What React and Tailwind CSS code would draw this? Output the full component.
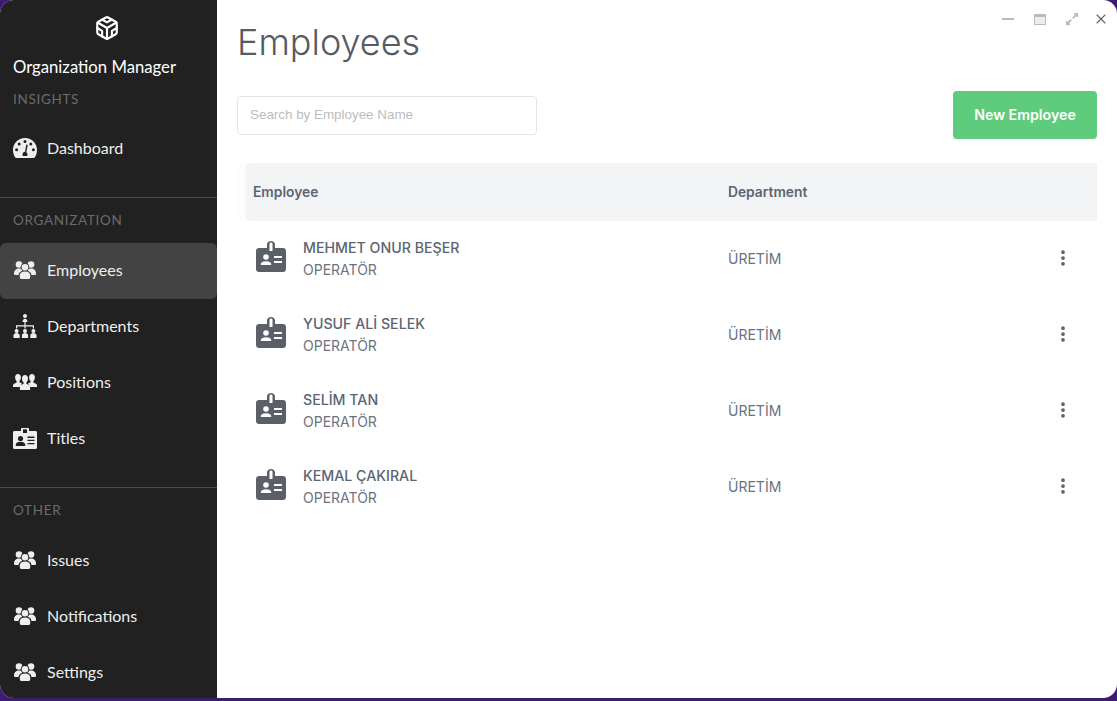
import React from 'react';
import { Codesandbox, X, EllipsisVertical } from 'lucide-react';
import { FaExpandAlt } from 'react-icons/fa';

const employees = [
    { name: 'MEHMET ONUR BEŞER', title: 'OPERATÖR', dept: 'ÜRETİM' },
    { name: 'YUSUF ALİ SELEK', title: 'OPERATÖR', dept: 'ÜRETİM' },
    { name: 'SELİM TAN', title: 'OPERATÖR', dept: 'ÜRETİM' },
    { name: 'KEMAL ÇAKIRAL', title: 'OPERATÖR', dept: 'ÜRETİM' },
];

const GaugeIcon = () => (
    <svg viewBox="0 0 24 20" className="w-[24px] h-[20px]" fill="currentColor">
        <path d="M12 0C5.300 0 0 5.400 0 12c0 2.400.6 4.700 1.800 6.700.4.800 1.100 1.300 2 1.300h16.400c.9 0 1.600-.5 2-1.300C23.400 16.700 24 14.400 24 12 24 5.400 18.700 0 12 0z" />
        <g fill="#212121">
            <circle cx="12" cy="3.600" r="1.500" />
            <circle cx="6.200" cy="6" r="1.500" />
            <circle cx="17.800" cy="6" r="1.500" />
            <circle cx="3.600" cy="11.800" r="1.500" />
            <circle cx="20.400" cy="11.800" r="1.500" />
            <path d="M13.300 6.500l1.500.4-1.500 7.300c.8.600 1.200 1.400 1.200 2.300 0 .6-.2 1-.4 1.500H9.900c-.2-.5-.4-.9-.4-1.500 0-1.500 1.200-2.700 2.500-2.800z" />
        </g>
    </svg>
);

const UsersIcon = () => (
    <svg viewBox="0 0 22 18" className="w-[22px] h-[18px] ml-[1px]" fill="currentColor">
        <mask id="users-gap">
            <rect width="22" height="18" fill="white" />
            <circle cx="11" cy="6.300" r="4.300" fill="black" />
            <path d="M4.500 18v-3.500c0-3 2.500-5 6.500-5s6.500 2 6.500 5V18z" fill="black" />
        </mask>
        <g mask="url(#users-gap)">
            <circle cx="5" cy="3.500" r="3.300" />
            <circle cx="17" cy="3.500" r="3.300" />
            <path d="M0 12.500C0 9.500 2 7.500 5 7.500s5 2 5 5v1.500H1.500C.5 14 0 13.500 0 12.500z" />
            <path d="M22 12.500c0-3-2-5-5-5s-5 2-5 5v1.500h8.500c1 0 1.500-.5 1.500-1.500z" />
        </g>
        <circle cx="11" cy="6.300" r="3.300" />
        <path d="M5.800 14.500c0-2.500 2-3.900 5.200-3.900s5.200 1.400 5.200 3.900v1.700c0 1-.8 1.800-1.800 1.800H7.600c-1 0-1.800-.8-1.800-1.800z" />
    </svg>
);

const SitemapIcon = () => (
    <svg viewBox="0 0 24 25" className="w-[24px] h-[25px]" fill="currentColor">
        <circle cx="12" cy="2" r="2" />
        <path d="M9.500 8c0-2 1-3.300 2.500-3.300S14.500 6 14.500 8z" />
        <path d="M11.400 8h1.200v3.300H21v3.200h-1.200v-2H12.600v2h-1.200v-2H4.200v2H3v-3.200h8.400z" />
        <circle cx="3.600" cy="17" r="2" />
        <circle cx="12" cy="17" r="2" />
        <circle cx="20.400" cy="17" r="2" />
        <path d="M0.500 24v-2.500c0-1.500 1.300-2.500 3.100-2.500s3.100 1 3.100 2.500V24z" />
        <path d="M8.900 24v-2.500c0-1.500 1.300-2.500 3.100-2.500s3.100 1 3.100 2.500V24z" />
        <path d="M17.300 24v-2.500c0-1.500 1.300-2.500 3.100-2.500s3.100 1 3.100 2.500V24z" />
    </svg>
);

const PositionsIcon = () => (
    <svg viewBox="0 0 24 16" className="w-[24px] h-[16px]" fill="currentColor">
        <path d="M5 0c1.700 0 2.900 1.300 2.900 3.200 0 1.600-.6 3-1.500 3.700v1.300l2.600 1.200L6.800 13H0v-1.500c0-.9.500-1.500 1.200-1.800l2.400-1.200V6.900C2.700 6.200 2.100 4.800 2.100 3.200 2.100 1.300 3.300 0 5 0z" />
        <path d="M19 0c-1.700 0-2.900 1.300-2.900 3.200 0 1.600.6 3 1.500 3.700v1.300L15 9.400l2.200 3.600H24v-1.500c0-.9-.5-1.500-1.200-1.800l-2.400-1.200V6.900c.9-.7 1.500-2.100 1.500-3.700C21.900 1.300 20.700 0 19 0z" />
        <path d="M12 1c1.800 0 3 1.400 3 3.400 0 1.600-.6 3.100-1.600 3.900v1.400l2.500 1.300c.8.400 1.200 1 1.200 1.900V16H6.900v-3.100c0-.9.400-1.500 1.200-1.900l2.500-1.300V8.300C9.600 7.500 9 6 9 4.400 9 2.400 10.200 1 12 1z" />
    </svg>
);

const TitlesIcon = () => (
    <svg viewBox="0 0 24 21" className="w-[24px] h-[21px]" fill="currentColor">
        <path d="M9 0h6c.6 0 1 .4 1 1v2h6.500c.8 0 1.500.7 1.500 1.500v15c0 .8-.7 1.500-1.500 1.500h-21C.7 21 0 20.300 0 19.500v-15C0 3.700.7 3 1.500 3H8V1c0-.6.400-1 1-1z" />
        <g fill="#212121">
            <path d="M10 1.300h4V5h-4z" />
            <circle cx="7.500" cy="10.500" r="2.600" />
            <path d="M2.800 18v-1.200c0-1.800 2-3 4.700-3s4.700 1.200 4.700 3V18z" />
            <path d="M14.500 8.500h7v1.400h-7zM14.500 11.700h7v1.400h-7zM14.500 14.900h7v1.400h-7z" />
        </g>
    </svg>
);

const BadgeIcon = () => (
    <svg viewBox="0 0 30 31" className="w-[30px] h-[31px] -mt-[5px] text-[#5b6068]" fill="currentColor">
        <path d="M11 3.500C11 1.500 12.800 0 15 0s4 1.500 4 3.500V7h8c1.700 0 3 1.300 3 3v18c0 1.700-1.300 3-3 3H3c-1.700 0-3-1.300-3-3V10c0-1.700 1.300-3 3-3h8z" />
        <g fill="#ffffff">
            <path d="M13.500 3c0-.8.600-1.400 1.500-1.400s1.500.6 1.500 1.400V10h-3z" />
            <circle cx="10" cy="16" r="2.800" />
            <path d="M4.800 24v-1c0-1.700 2.200-2.800 5.200-2.800s5.200 1.100 5.200 2.800v1z" />
            <path d="M18 15h8v1.900h-8zM18 20h8v1.900h-8z" />
        </g>
    </svg>
);

const NavItem = ({ icon: Icon, label, active }) => (
    <div className={`h-[56px] pb-[2px] flex items-center pl-[13px] text-[16px] text-[#eeeeee] rounded-md ${active ? 'bg-[#434343]' : ''}`} style={{ fontFamily: 'Lato, sans-serif' }}>
        <span className="w-[34px] flex justify-start">
            <Icon />
        </span>
        <span>{label}</span>
    </div>
);

const SectionLabel = ({ children }) => (
    <div className="pl-[13px] text-[13.500px] leading-[17px] tracking-[0.05em] text-[#6b6b6b]" style={{ fontFamily: 'Lato, sans-serif' }}>{children}</div>
);

const App = () => {
    return (
        <div className="w-[1117px] h-[701px] bg-[#3f1a78] overflow-hidden" style={{ fontFamily: 'Inter, sans-serif' }}>
            <div className="h-[698px] flex rounded-[14px] overflow-hidden bg-white">
                {/* Sidebar */}
                <aside className="w-[217px] shrink-0 bg-[#212121] flex flex-col">
                    <div className="pt-[15px] flex justify-center">
                        <Codesandbox className="w-[26px] h-[26px] text-white -ml-[3px]" strokeWidth={2} />
                    </div>
                    <div className="mt-[14px] pl-[13px] text-[16.700px] leading-[24px] text-white" style={{ fontFamily: 'Lato, sans-serif' }}>Organization Manager</div>
                    <div className="mt-[12px]"><SectionLabel>INSIGHTS</SectionLabel></div>
                    <div className="mt-[13px]">
                        <NavItem icon={GaugeIcon} label="Dashboard" />
                    </div>
                    <div className="mt-[20px] border-t border-[#4a4a4a]" />
                    <div className="mt-[14px]"><SectionLabel>ORGANIZATION</SectionLabel></div>
                    <div className="mt-[14px]">
                        <NavItem icon={UsersIcon} label="Employees" active />
                        <NavItem icon={SitemapIcon} label="Departments" />
                        <NavItem icon={PositionsIcon} label="Positions" />
                        <NavItem icon={TitlesIcon} label="Titles" />
                    </div>
                    <div className="mt-[20px] border-t border-[#4a4a4a]" />
                    <div className="mt-[14px]"><SectionLabel>OTHER</SectionLabel></div>
                    <div className="mt-[14px]">
                        <NavItem icon={UsersIcon} label="Issues" />
                        <NavItem icon={UsersIcon} label="Notifications" />
                        <NavItem icon={UsersIcon} label="Settings" />
                    </div>
                </aside>

                {/* Main */}
                <main className="flex-1 pl-[20px] pr-[20px] relative">
                    <div className="absolute top-[11px] right-[8px] flex items-center gap-[14px] text-[#b8bcc2]">
                        <span className="w-[12px] h-[2px] bg-[#b8bcc2]" />
                        <span className="ml-[6px] w-[12px] h-[11px] border border-[#b8bcc2] border-t-[3px] bg-[#eceef0]" />
                        <FaExpandAlt className="ml-[5px] w-[14px] h-[14px]" />
                        <X className="w-[16px] h-[16px] text-[#5b636d]" strokeWidth={1.7} />
                    </div>
                    <h1 className="pt-[18px] text-[36px] leading-[48px] font-light text-[#555b63]">Employees</h1>
                    <div className="mt-[25px] flex items-center justify-between">
                        <div className="w-[300px] h-[39px] border border-[#e2e4e7] rounded flex items-center px-[12px] text-[13.400px] text-[#bdbdbd]" style={{ fontFamily: '"Liberation Sans", sans-serif' }}>
                            Search by Employee Name
                        </div>
                        <button className="w-[144px] h-[48px] bg-[#5fcb7c] rounded text-white font-semibold text-[14.200px]">New Employee</button>
                    </div>
                    <div className="mt-[24px] pl-[8px] rounded-md bg-[#fdfdfd]">
                        <div className="h-[58px] bg-[#f3f4f6] rounded-l-md flex items-center text-[13.800px] font-semibold text-[#5b6573]">
                            <div className="w-[483px] pl-[8px]">Employee</div>
                            <div>Department</div>
                        </div>
                    </div>
                    <div className="ml-[8px]">
                        {employees.map(e => (
                            <div key={e.name} className="h-[76px] flex items-center">
                                <div className="w-[483px] flex items-center pl-[11px]">
                                    <BadgeIcon />
                                    <div className="ml-[17px]">
                                        <div className="text-[14.200px] leading-[22px] font-medium text-[#5b6573]">{e.name}</div>
                                        <div className="text-[14px] leading-[22px] text-[#6b7280]">{e.title}</div>
                                    </div>
                                </div>
                                <div className="flex-1 pb-[2px] text-[14px] text-[#6b7280]">{e.dept}</div>
                                <EllipsisVertical className="w-[20px] h-[20px] mb-[2px] mr-[24px] text-[#5b6068]" strokeWidth={2.5} />
                            </div>
                        ))}
                    </div>
                </main>
            </div>
        </div>
    );
};

export default App;
